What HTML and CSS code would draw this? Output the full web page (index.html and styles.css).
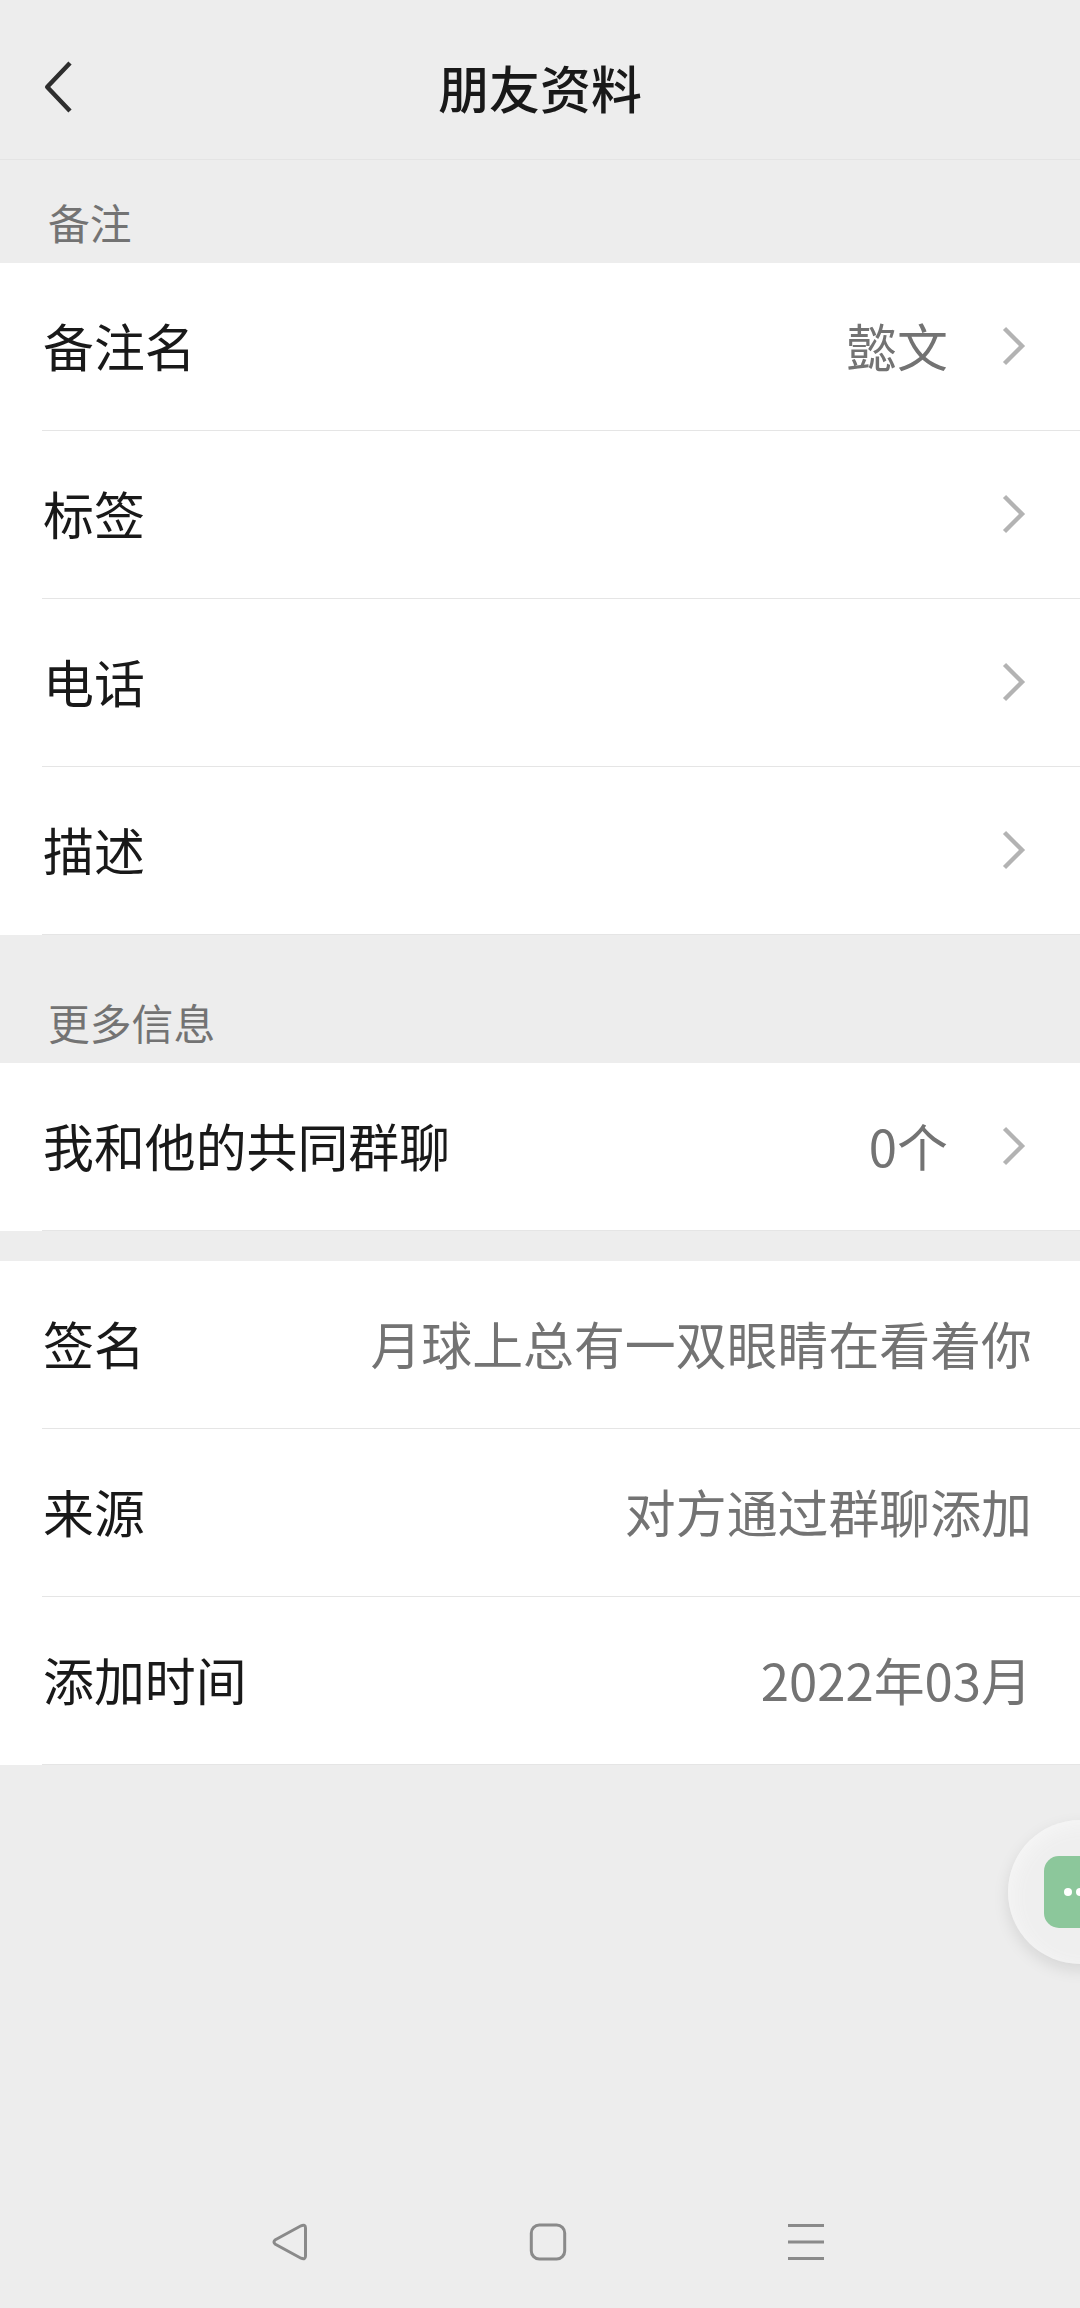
FILE: index.html
```html
<!DOCTYPE html>
<html lang="zh-CN">
<head>
    <meta charset="UTF-8">
    <meta name="viewport" content="width=device-width, initial-scale=1.0">
    <title>朋友资料</title>
    <link rel="stylesheet" href="styles.css">
</head>
<body>
    <div class="screen">
        <header class="header">
            <svg class="back" width="34" height="60" viewBox="0 0 34 60">
                <path d="M28 6 L5.200 30 L28 54" />
            </svg>
            <h1>朋友资料</h1>
        </header>

        <main>
            <h2 class="section-title">备注</h2>
            <div class="group">
                <div class="row">
                    <span class="label">备注名</span>
                    <span class="value">懿文</span>
                    <svg class="arrow" width="24" height="42" viewBox="0 0 24 42"><path d="M2.500 3.500 L20 21 L2.500 38.500" /></svg>
                </div>
                <div class="row">
                    <span class="label">标签</span>
                    <svg class="arrow" width="24" height="42" viewBox="0 0 24 42"><path d="M2.500 3.500 L20 21 L2.500 38.500" /></svg>
                </div>
                <div class="row">
                    <span class="label">电话</span>
                    <svg class="arrow" width="24" height="42" viewBox="0 0 24 42"><path d="M2.500 3.500 L20 21 L2.500 38.500" /></svg>
                </div>
                <div class="row">
                    <span class="label">描述</span>
                    <svg class="arrow" width="24" height="42" viewBox="0 0 24 42"><path d="M2.500 3.500 L20 21 L2.500 38.500" /></svg>
                </div>
            </div>

            <h2 class="section-title more">更多信息</h2>
            <div class="group">
                <div class="row">
                    <span class="label">我和他的共同群聊</span>
                    <span class="value">0个</span>
                    <svg class="arrow" width="24" height="42" viewBox="0 0 24 42"><path d="M2.500 3.500 L20 21 L2.500 38.500" /></svg>
                </div>
            </div>

            <div class="group info">
                <div class="row">
                    <span class="label">签名</span>
                    <span class="value">月球上总有一双眼睛在看着你</span>
                </div>
                <div class="row">
                    <span class="label">来源</span>
                    <span class="value">对方通过群聊添加</span>
                </div>
                <div class="row">
                    <span class="label">添加时间</span>
                    <span class="value">2022年03月</span>
                </div>
            </div>
        </main>

        <!-- burbuja flotante -->
        <div class="bubble">
            <div class="bubble-icon">
                <span class="dot"></span>
                <span class="dot"></span>
                <span class="dot"></span>
            </div>
        </div>

        <nav class="navbar">
            <svg width="40" height="40" viewBox="0 0 40 40"><path d="M5.400 17.800 L31 3.800 Q35.500 2 35.500 6 V34 Q35.500 38 31 36.200 L5.400 22.200 Q2.500 20 5.400 17.800 Z" /></svg>
            <svg width="40" height="40" viewBox="0 0 40 40"><rect x="3.300" y="3" width="33.400" height="34" rx="8" /></svg>
            <svg width="40" height="40" viewBox="0 0 40 40"><path d="M2 3.600 H38 M2 20 H38 M2 36.400 H38" /></svg>
        </nav>
    </div>
</body>
</html>
```

FILE: styles.css
```css
* {
    box-sizing: border-box;
}
body {
    margin: 0;
    background-color: #ededed;
    font-family: "Noto Sans CJK SC", sans-serif;
    color: #191919;
}
.screen {
    position: relative;
    display: flex;
    flex-direction: column;
    height: 2308px;
    overflow: hidden;
}
.header {
    display: grid;
    grid-template-columns: 160px 1fr 160px;
    align-items: center;
    height: 160px;
    padding-top: 14px;
    border-bottom: 1px solid #e4e4e4;
}
.header h1 {
    margin: 0;
    font-size: 50.9px;
    font-weight: 500;
    line-height: 70px;
    text-align: center;
}
.back {
    margin-left: 42px;
    fill: none;
    stroke: #2e2e2e;
    stroke-width: 4.5;
    stroke-linejoin: round;
}
.section-title {
    margin: 0;
    height: 103px;
    padding: 32px 48px 0;
    font-size: 41.8px;
    font-weight: 400;
    line-height: 60px;
    color: #737373;
}
.section-title.more {
    height: 128px;
    padding-top: 57px;
}
.group {
    background-color: #fff;
}
.group.info {
    margin-top: 30px;
}
.row {
    display: flex;
    align-items: center;
    height: 168px;
    margin-left: 42px;
    padding-right: 48px;
    border-bottom: 1px solid #e5e5e5;
    font-size: 50.9px;
    line-height: 74px;
}
.label {
    margin-right: auto;
    padding-left: 1px;
    padding-bottom: 3px;
}
.value {
    padding-bottom: 3px;
    color: #737373;
}
.arrow {
    margin-left: 54px;
    margin-right: 6px;
    margin-bottom: 2px;
    fill: none;
    stroke: #b3b3b3;
    stroke-width: 4.4;
}
.bubble {
    position: absolute;
    top: 1820px;
    right: -72px;
    display: flex;
    align-items: center;
    justify-content: center;
    width: 144px;
    height: 144px;
    border-radius: 50%;
    background-color: #efefef;
    box-shadow: 0 6px 16px rgba(0, 0, 0, 0.1), inset 3px 5px 18px #f6f6f6;
}
.bubble-icon {
    display: flex;
    align-items: center;
    justify-content: center;
    gap: 4px;
    width: 72px;
    height: 72px;
    border-radius: 15px;
    background-color: #8cc79b;
}
.dot {
    width: 8px;
    height: 8px;
    border-radius: 50%;
    background-color: #fff;
}
.navbar {
    display: flex;
    justify-content: space-between;
    margin-top: auto;
    padding: 0 254px 46px 270px;
}
.navbar svg {
    fill: none;
    stroke: #8a8a8a;
    stroke-width: 3;
}
```
